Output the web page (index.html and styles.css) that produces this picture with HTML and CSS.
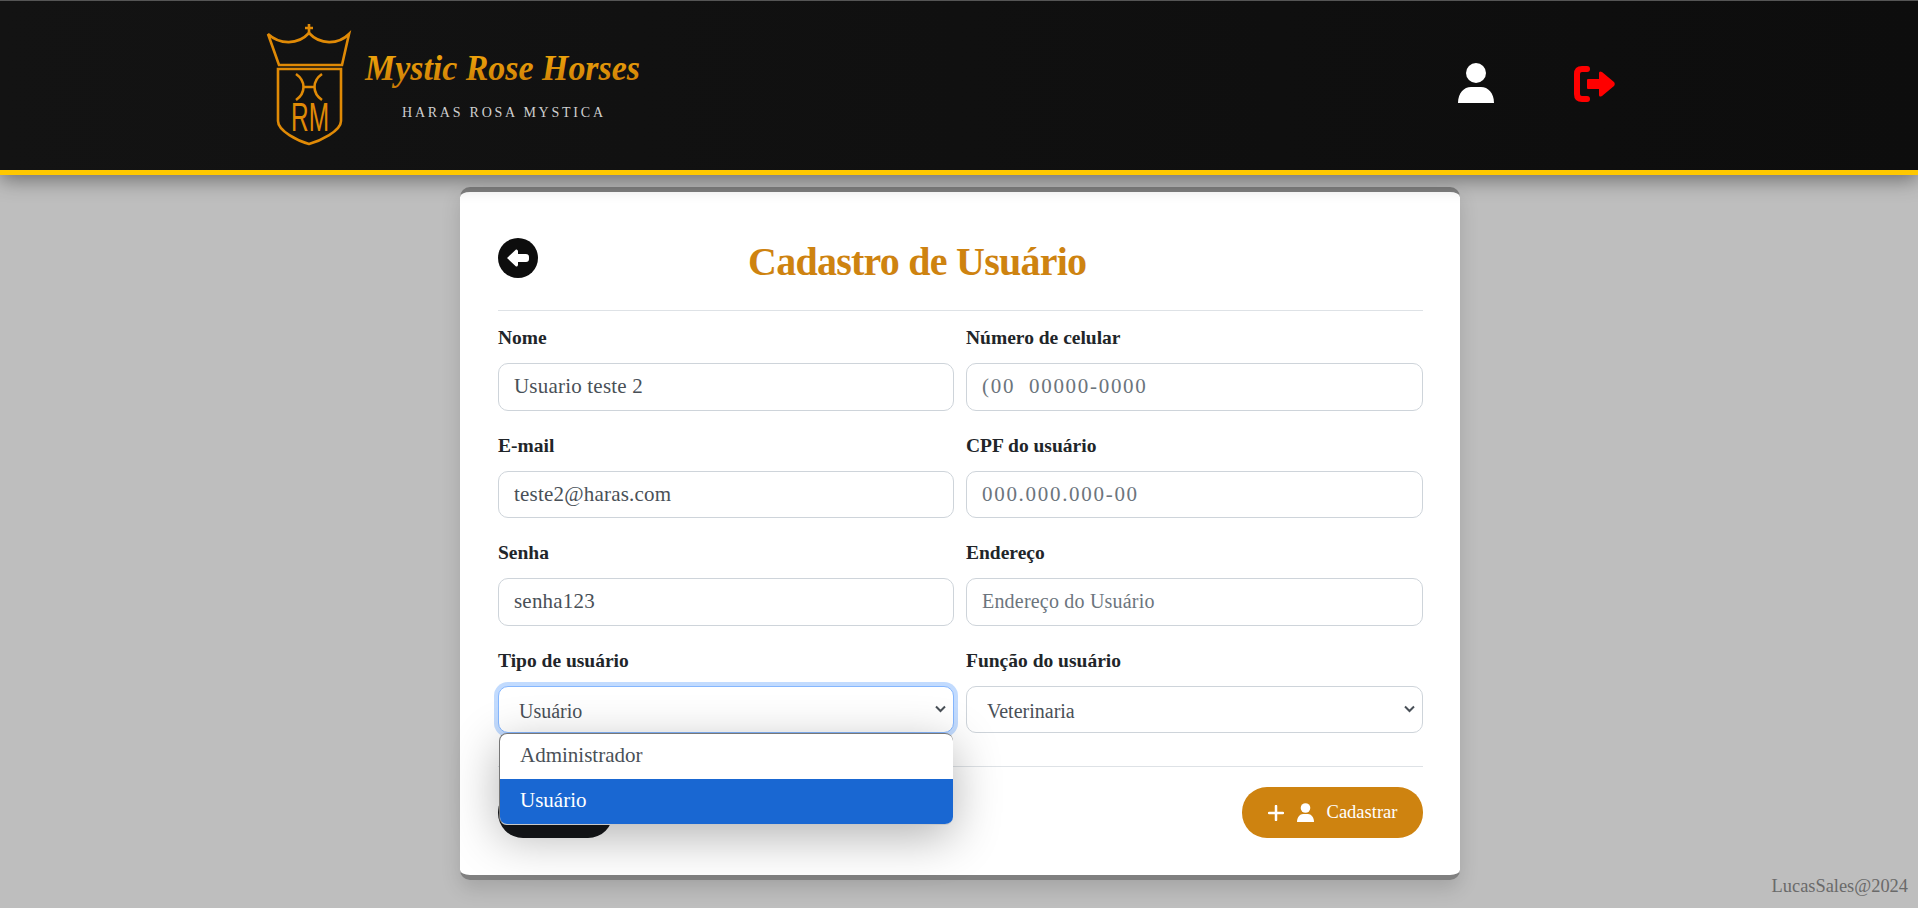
FILE: index.html
```html
<!DOCTYPE html>
<html lang="pt-BR">
<head>
    <meta charset="UTF-8">
    <title>Cadastro de Usuário</title>
    <link rel="stylesheet" href="styles.css">
</head>
<body>
    <header class="top-bar">
        <a class="logo" href="#">
            <svg width="430" height="130" viewBox="0 0 430 130">
                <defs>
                    <linearGradient id="gold" x1="0" y1="0" x2="0" y2="1">
                        <stop offset="0" stop-color="#f5ab0c"/>
                        <stop offset="1" stop-color="#c97a05"/>
                    </linearGradient>
                </defs>
                <!-- crown and shield -->
                <g fill="none" stroke="#e08a06" stroke-width="2.600">
                    <path d="M4 13 L15 44 H78 L85 13 C74 24 56 24 45 12 C34 24 16 24 4 13 Z"/>
                    <path d="M45 3 V12 M41 7 H49"/>
                    <path d="M14 48 H77 V100 C77 110 56 120 45 123 C34 120 14 110 14 100 Z"/>
                    <path d="M32 53 C42 60 42 72 32 79 M58 53 C48 60 48 72 58 79 M39 66 H51"/>
                </g>
                <text class="logo-rm" x="46" y="110" text-anchor="middle" textLength="38" lengthAdjust="spacingAndGlyphs">RM</text>
                <text class="logo-name" x="101" y="59" textLength="275" lengthAdjust="spacingAndGlyphs">Mystic Rose Horses</text>
                <text class="logo-sub" x="138" y="96" textLength="201" lengthAdjust="spacing">HARAS ROSA MYSTICA</text>
            </svg>
        </a>
        <nav class="top-actions">
            <a href="#" class="top-icon">
                <svg width="36" height="40" viewBox="0 0 36 40"><circle cx="18" cy="10" r="10" fill="#fff"/><path d="M0 40 C0 30 6 24 13 24 H23 C30 24 36 30 36 40 Z" fill="#fff"/></svg>
            </a>
            <a href="#" class="top-icon exit-icon">
                <svg width="41" height="36" viewBox="0 0 41 36"><path d="M13 3 H8 Q3 3 3 8 V28 Q3 33 8 33 H13" fill="none" stroke="#f00" stroke-width="6" stroke-linecap="round"/><path d="M14 13 H25 V7 Q25 4.500 28 6 L40 16 Q41.500 18 40 20 L28 30 Q25 31.500 25 29 V23 H14 Q13 23 13 22 V14 Q13 13 14 13 Z" fill="#f00"/></svg>
            </a>
        </nav>
    </header>

    <main class="card">
        <div class="card-head">
            <a href="#" class="back-btn">
                <svg width="22" height="18" viewBox="0 0 22 18"><path d="M0 9 L9 0.500 Q10.500 0 11 2 V5 H19 Q22 5 22 8 V10 Q22 13 19 13 H11 V16 Q10.500 18 9 17.500 Z" fill="#fff"/></svg>
            </a>
            <h1 class="card-title">Cadastro de Usuário</h1>
        </div>

        <form class="user-form">
            <div class="field">
                <label for="nome">Nome</label>
                <input type="text" id="nome" value="Usuario teste 2">
            </div>
            <div class="field">
                <label for="celular">Número de celular</label>
                <input type="text" id="celular" class="digits" placeholder="(00  00000-0000">
            </div>
            <div class="field">
                <label for="email">E-mail</label>
                <input type="text" id="email" value="teste2@haras.com">
            </div>
            <div class="field">
                <label for="cpf">CPF do usuário</label>
                <input type="text" id="cpf" class="digits" placeholder="000.000.000-00">
            </div>
            <div class="field">
                <label for="senha">Senha</label>
                <input type="text" id="senha" value="senha123">
            </div>
            <div class="field">
                <label for="endereco">Endereço</label>
                <input type="text" id="endereco" class="small" placeholder="Endereço do Usuário">
            </div>
            <div class="field select-field">
                <label for="tipo">Tipo de usuário</label>
                <select id="tipo" class="is-open">
                    <option>Administrador</option>
                    <option selected>Usuário</option>
                </select>
                <ul class="select-menu">
                    <li>Administrador</li>
                    <li class="active">Usuário</li>
                </ul>
            </div>
            <div class="field">
                <label for="funcao">Função do usuário</label>
                <select id="funcao">
                    <option>Veterinaria</option>
                </select>
            </div>
        </form>

        <div class="card-foot">
            <button type="button" class="btn btn-dark" aria-label="Voltar"></button>
            <button type="submit" class="btn btn-gold">
                <svg width="16" height="16" viewBox="0 0 16 16"><path d="M8 1 V15 M1 8 H15" stroke="#fff" stroke-width="2.500" stroke-linecap="round"/></svg>
                <svg width="17" height="19" viewBox="0 0 17 19"><circle cx="8.500" cy="5" r="4.800" fill="#fff"/><path d="M0 19 C0 14 3 11 6 11 H11 C14 11 17 14 17 19 Z" fill="#fff"/></svg>
                <span>Cadastrar</span>
            </button>
        </div>
    </main>

    <footer class="credit">LucasSales@2024</footer>
</body>
</html>
```

FILE: styles.css
```css
* {
    box-sizing: border-box;
}

html, body {
    height: 100%;
}

body {
    margin: 0;
    overflow: hidden;
    background-color: #bebebe;
    font-family: "Liberation Serif", "DejaVu Serif", serif;
    color: #212529;
    position: relative;
}

/* Top bar */
.top-bar {
    position: relative;
    z-index: 10;
    height: 175px;
    display: flex;
    justify-content: space-between;
    background: linear-gradient(90deg, #131313, #0d0d0d);
    border-top: 1px solid #555;
    border-bottom: 5px solid #ffc800;
    box-shadow: 0 4px 20px rgba(0, 0, 0, 0.45);
    padding: 20px 303px 0 264px;
}

.logo {
    display: block;
    height: 130px;
}

.logo-rm {
    font: 40px "Liberation Sans", sans-serif;
    fill: #e08a06;
}

.logo-name {
    font: italic bold 36px "Liberation Serif", serif;
    fill: url(#gold);
}

.logo-sub {
    font: 14px "Liberation Serif", serif;
    fill: #cfcfcf;
}

.top-actions {
    display: flex;
    gap: 80px;
    padding-top: 42px;
}

.top-icon {
    display: block;
    height: 40px;
}

.exit-icon {
    margin-top: 3px;
}

/* Card */
.card {
    width: 1000px;
    height: 693px;
    margin: 12px 0 0 460px;
    padding: 46px 37px 0 38px;
    background-color: #fff;
    border-top: 5px solid #808080;
    border-bottom: 5px solid #808080;
    border-radius: 10px;
    box-shadow: 0 8px 20px rgba(0, 0, 0, 0.14);
}

.card-head {
    display: flex;
    height: 73px;
    border-bottom: 1px solid #dee2e6;
}

.back-btn {
    flex: none;
    width: 40px;
    height: 40px;
    border-radius: 50%;
    background-color: #0d0d0d;
    display: flex;
    align-items: center;
    justify-content: center;
}

.card-title {
    margin: 0 0 0 210px;
    color: #ce8310;
    font-size: 40px;
    line-height: 48px;
    font-weight: bold;
    letter-spacing: -0.750px;
}

/* Form */
.user-form {
    display: grid;
    grid-template-columns: 456px 457px;
    column-gap: 12px;
    row-gap: 23px;
    padding-top: 15px;
}

.field {
    display: flex;
    flex-direction: column;
}

.field label {
    font-size: 19.500px;
    font-weight: bold;
    line-height: 24px;
    margin-bottom: 13px;
}

.field input,
.field select {
    width: 100%;
    height: 47.500px;
    padding: 0 15px;
    border: 1px solid #ced4da;
    border-radius: 10px;
    background-color: #fff;
    color: #495057;
    font-family: inherit;
    font-size: 21px;
    letter-spacing: 0.200px;
}

.field input::placeholder {
    color: #6c757d;
}

.field input.digits {
    letter-spacing: 1.700px;
}

.field input.small {
    font-size: 20px;
}

.field select {
    appearance: none;
    padding: 3px 15px 0 20px;
    font-size: 20px;
    letter-spacing: 0;
    background-image: url("data:image/svg+xml,%3Csvg xmlns='http://www.w3.org/2000/svg' width='11' height='8' viewBox='0 0 11 8'%3E%3Cpath d='M1 1.500 L5.500 6 L10 1.500' fill='none' stroke='%23495057' stroke-width='2'/%3E%3C/svg%3E");
    background-repeat: no-repeat;
    background-position: right 7px center;
}

.field select.is-open {
    border-color: #86b7fe;
    box-shadow: 0 0 0 4px rgba(13, 110, 253, 0.25);
    outline: none;
}

.select-field {
    position: relative;
}

.select-menu {
    position: absolute;
    z-index: 5;
    left: 1px;
    right: 1px;
    top: 84px;
    margin: 0;
    padding: 0;
    list-style: none;
    overflow: hidden;
    background-color: #fff;
    border-bottom: 1px solid #c8c8c8;
    border-left: 1px solid #777;
    border-top: 1px solid #777;
    border-radius: 8px;
    box-shadow: 0 12px 48px rgba(0, 0, 0, 0.3);
    font-size: 21px;
    color: #495057;
}

.select-menu li {
    height: 45px;
    line-height: 42px;
    padding-left: 20px;
}

.select-menu li.active {
    background-color: #1967d2;
    color: #fff;
}

/* Footer of card */
.card-foot {
    display: flex;
    justify-content: space-between;
    margin-top: 33px;
    padding-top: 20px;
    border-top: 1px solid #dee2e6;
}

.btn {
    display: inline-flex;
    align-items: center;
    justify-content: center;
    gap: 13px;
    height: 51px;
    border: none;
    border-radius: 25px;
    color: #fff;
    font-family: inherit;
    font-size: 18.500px;
}

.btn-dark {
    width: 115px;
    background-color: #16181b;
}

.btn-gold {
    width: 181px;
    background-color: #ce8310;
}

.credit {
    position: absolute;
    right: 10px;
    bottom: 11px;
    font-size: 18.400px;
    color: #6a6a6a;
}
```
